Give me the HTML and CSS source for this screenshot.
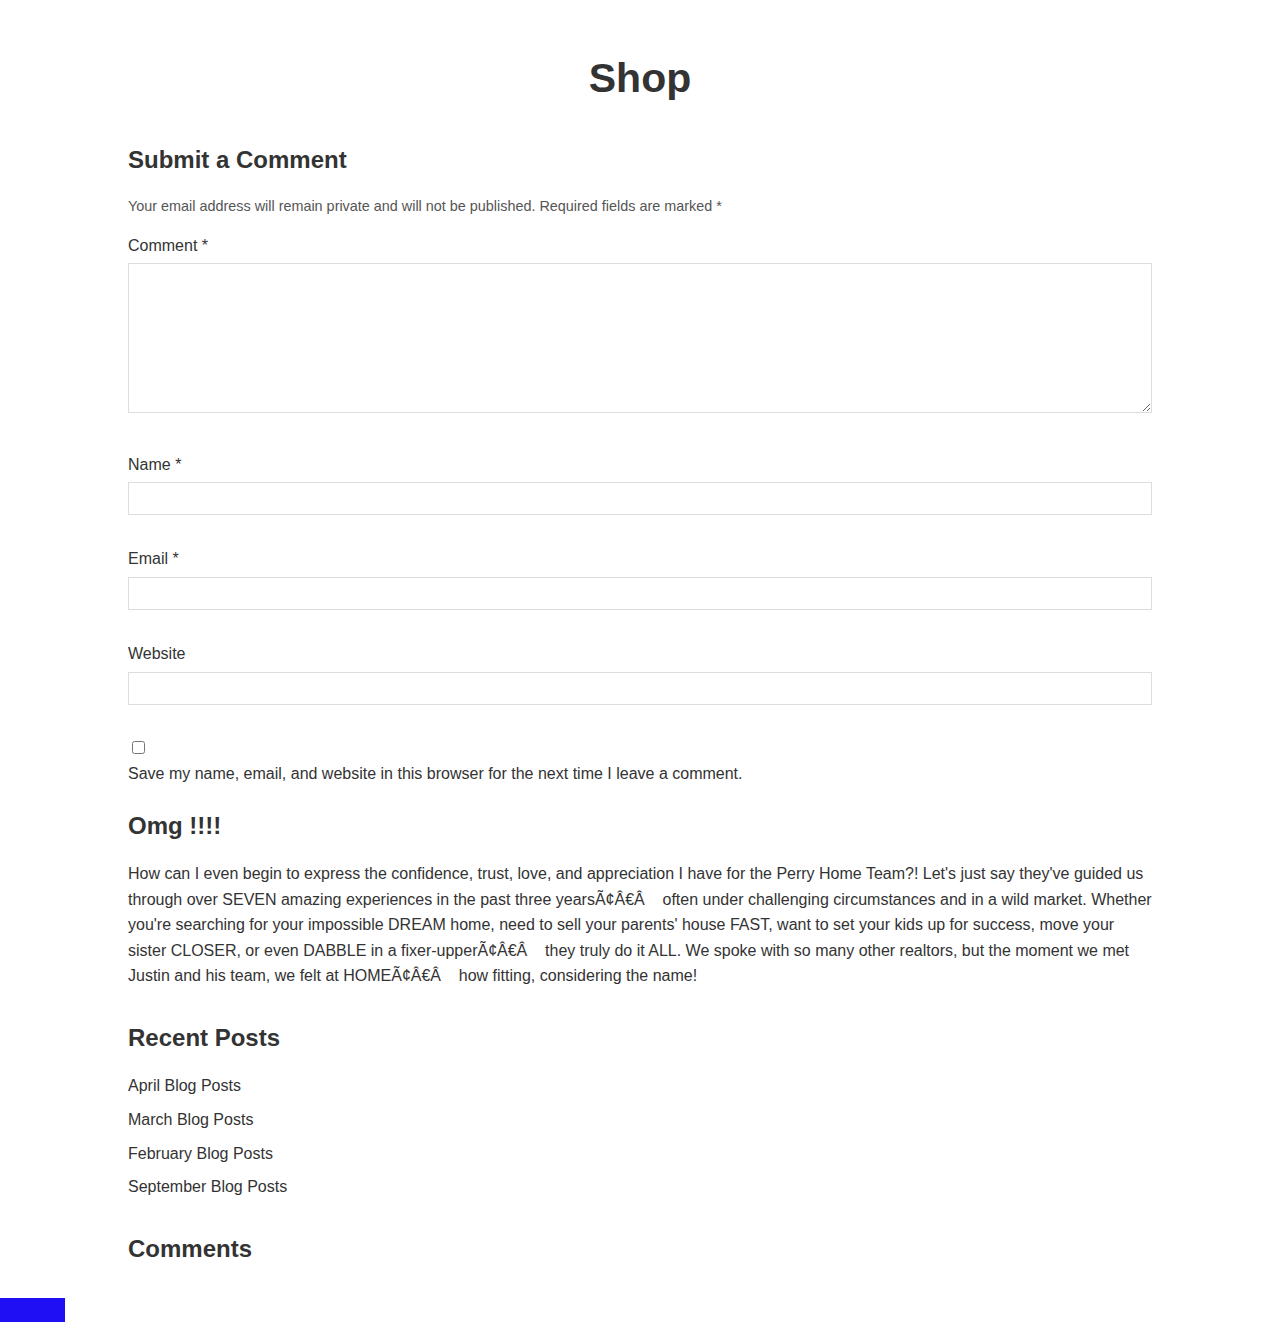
FILE: index.html
```html
<!DOCTYPE html>
<html lang="en">
<head>
<meta charset="utf-8">
<title>Shop</title>
<link rel="stylesheet" href="styles.css">
</head>
<body>
<main class="page">
  <h1 class="page-title">Shop</h1>

  <section class="respond">
    <h2 class="section-title title-submit">Submit a Comment</h2>
    <p class="note">Your email address will remain private and will not be published. Required fields are marked *</p>
    <form class="comment-form">
      <div class="field field-comment">
        <label class="field-label" for="comment">Comment *</label>
        <textarea id="comment" class="field-textarea"></textarea>
      </div>
      <div class="field field-name">
        <label class="field-label" for="author">Name *</label>
        <input id="author" class="field-input" type="text">
      </div>
      <div class="field field-email">
        <label class="field-label" for="email">Email *</label>
        <input id="email" class="field-input" type="text">
      </div>
      <div class="field field-url">
        <label class="field-label" for="url">Website</label>
        <input id="url" class="field-input" type="text">
      </div>
      <div class="consent">
        <input id="consent" class="consent-box" type="checkbox">
        <label class="consent-label" for="consent">Save my name, email, and website in this browser for the next time I leave a comment.</label>
      </div>
    </form>
  </section>

  <section class="review">
    <h2 class="section-title title-omg">Omg !!!!</h2>
    <p class="review-text">How can I even begin to express the confidence, trust, love, and appreciation I have for the Perry Home Team?! Let's just say they've guided us through over SEVEN amazing experiences in the past three yearsÃ¢Â€Â&nbsp;&nbsp;&nbsp; often under challenging circumstances and in a wild market. Whether you're searching for your impossible DREAM home, need to sell your parents' house FAST, want to set your kids up for success, move your sister CLOSER, or even DABBLE in a fixer-upperÃ¢Â€Â&nbsp;&nbsp;&nbsp; they truly do it ALL. We spoke with so many other realtors, but the moment we met Justin and his team, we felt at HOMEÃ¢Â€Â&nbsp;&nbsp;&nbsp; how fitting, considering the name!</p>
  </section>

  <section class="recent">
    <h2 class="section-title title-recent">Recent Posts</h2>
    <ul class="post-list">
      <li><a class="post-link" href="#">April Blog Posts</a></li>
      <li><a class="post-link" href="#">March Blog Posts</a></li>
      <li><a class="post-link" href="#">February Blog Posts</a></li>
      <li><a class="post-link" href="#">September Blog Posts</a></li>
    </ul>
  </section>

  <section class="comments">
    <h2 class="section-title title-comments">Comments</h2>
  </section>
</main>
<div class="corner-widget"></div>
</body>
</html>
```

FILE: styles.css
```css
html, body {
  margin: 0;
  padding: 0;
  background: #fff;
}

body {
  font-family: "Liberation Sans", Arial, sans-serif;
  color: #333;
  font-size: 16px;
}

.page {
  width: 1024px;
  margin: 0 auto;
  padding-top: 52px;
  padding-bottom: 60px;
}

.page-title {
  margin: 0;
  font-size: 41px;
  line-height: 53px;
  font-weight: 700;
  text-align: center;
  color: #333;
}

.section-title {
  margin: 0;
  font-size: 24px;
  line-height: 29px;
  font-weight: 700;
  color: #333;
}

.title-submit {
  margin-top: 40px;
}

.note {
  margin: 21.5px 0 0;
  font-size: 14.4px;
  line-height: 20px;
  color: #555;
}

.comment-form {
  margin: 0;
}

.field {
  display: flex;
  flex-direction: column;
}

.field-label {
  display: block;
  line-height: 20px;
  margin-bottom: 7px;
  color: #333;
}

.field-comment {
  margin-top: 20px;
}

.field-name {
  margin-top: 42px;
}

.field-email,
.field-url {
  margin-top: 34px;
}

.field-email .field-label,
.field-url .field-label {
  margin-bottom: 8px;
}

.field-textarea {
  box-sizing: border-box;
  width: 100%;
  height: 150px;
  margin: 0;
  border: 1px solid #ddd;
  border-radius: 0;
  padding: 6px;
  font-family: inherit;
  font-size: 16px;
  display: block;
}

.field-input {
  box-sizing: border-box;
  width: 100%;
  height: 33px;
  margin: 0;
  border: 1px solid #ddd;
  border-radius: 0;
  padding: 4px 8px;
  font-family: inherit;
  font-size: 16px;
  display: block;
}

.consent {
  margin-top: 36px;
}

.consent-box {
  display: block;
  width: 13px;
  height: 13px;
  margin: 0 0 0 4px;
}

.consent-label {
  display: block;
  margin-top: 10px;
  line-height: 20px;
  color: #333;
}

.title-omg {
  margin-top: 27.5px;
}

.review-text {
  margin: 21px 0 0;
  line-height: 25.5px;
  color: #333;
}

.title-recent {
  margin-top: 34.5px;
}

.post-list {
  list-style: none;
  margin: 17.2px 0 0;
  padding: 0;
}

.post-list li {
  line-height: 33.7px;
}

.post-link {
  color: #333;
  text-decoration: none;
}

.title-comments {
  margin-top: 30.1px;
}

.corner-widget {
  position: fixed;
  left: 0;
  bottom: 8px;
  width: 65px;
  height: 24px;
  background: #1f0ff5;
}
```
